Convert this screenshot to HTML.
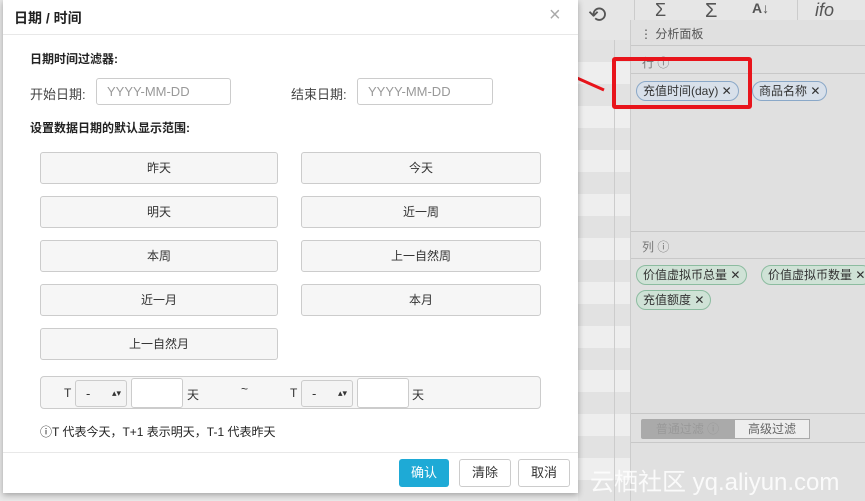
<!DOCTYPE html>
<html><head><meta charset="utf-8"><style>
*{box-sizing:border-box}
body{margin:0;width:865px;height:501px;overflow:hidden;position:relative;background:#e6e6e6;font-family:"Liberation Sans","Noto Sans CJK SC",sans-serif;font-size:12px;color:#333}
.abs{position:absolute}
.dlg{left:3px;top:0;width:575px;height:493px;background:#fff;box-shadow:0 2px 6px rgba(0,0,0,.3)}
.btn{position:absolute;width:238px;height:32px;background:#f6f6f6;border:1px solid #ccc;border-radius:3px;text-align:center;line-height:30px;font-size:12px;color:#333}
.inp{position:absolute;height:27px;border:1px solid #ccc;border-radius:3px;color:#999;font-size:13px;line-height:25px;padding-left:10px;background:#fff}
.tag{position:absolute;height:20px;border-radius:10px;line-height:18px;font-size:12px;padding:0 6px;color:#333}
.row{position:absolute;left:0;width:577px;height:1px;background:#ccc}
</style></head><body>
<!-- background table -->
<div class="abs" style="left:0;top:0;width:630px;height:501px;background:#e8e8e8"></div>
<div class="abs" style="left:578px;top:40px;width:52px;height:461px;background:repeating-linear-gradient(#e2e2e2 0 22px,#eeeeee 22px 44px)"></div>
<div class="abs" style="left:614px;top:40px;width:1px;height:461px;background:#ccc"></div>
<!-- toolbar -->
<div class="abs" style="left:578px;top:0;width:287px;height:40px;background:#e6e6e6"></div>
<div class="abs" style="left:588px;top:2px;font-size:22px;color:#555">⟲</div>
<div class="abs" style="left:634px;top:0;width:1px;height:20px;background:#ccc"></div>
<div class="abs" style="left:655px;top:0;font-size:18px;color:#555">Σ</div>
<div class="abs" style="left:705px;top:0;font-size:20px;color:#555">Σ</div>
<div class="abs" style="left:752px;top:0;font-size:14px;color:#555;font-weight:bold">A↓</div>
<div class="abs" style="left:797px;top:0;width:1px;height:20px;background:#ccc"></div>
<div class="abs" style="left:815px;top:0;font-size:18px;color:#555;font-style:italic">ifo</div>
<!-- panel -->
<div class="abs" style="left:630px;top:20px;width:235px;height:481px;background:#e0e0e0;border-left:1px solid #ccc"></div>
<div class="abs" style="left:640px;top:25px;font-size:12px;color:#555">⋮ 分析面板</div>
<div class="abs" style="left:631px;top:45px;width:234px;height:1px;background:#c8c8c8"></div>
<div class="abs" style="left:642px;top:54px;color:#777">行 ⓘ</div>
<div class="abs" style="left:631px;top:73px;width:234px;height:1px;background:#c8c8c8"></div>
<div class="tag" style="left:636px;top:81px;border:1px solid #8aa8c8;background:#d8e0ea">充值时间(day) ✕</div>
<div class="tag" style="left:752px;top:81px;border:1px solid #8aa8c8;background:#d8e0ea">商品名称 ✕</div>
<div class="abs" style="left:631px;top:231px;width:234px;height:1px;background:#c8c8c8"></div>
<div class="abs" style="left:642px;top:238px;color:#777">列 ⓘ</div>
<div class="abs" style="left:631px;top:258px;width:234px;height:1px;background:#c8c8c8"></div>
<div class="tag" style="left:636px;top:265px;border:1px solid #8cbca0;background:#cfe2d6">价值虚拟币总量 ✕</div>
<div class="tag" style="left:761px;top:265px;border:1px solid #8cbca0;background:#cfe2d6;white-space:nowrap">价值虚拟币数量 ✕</div>
<div class="tag" style="left:636px;top:290px;border:1px solid #8cbca0;background:#cfe2d6">充值额度 ✕</div>
<div class="abs" style="left:631px;top:413px;width:234px;height:1px;background:#c8c8c8"></div>
<div class="abs" style="left:641px;top:419px;width:93px;height:20px;background:#aaa;border-radius:2px 0 0 2px;color:#999;text-align:center;line-height:20px">普通过滤 ⓘ</div>
<div class="abs" style="left:734px;top:419px;width:76px;height:20px;background:#eee;border:1px solid #aaa;color:#666;text-align:center;line-height:18px">高级过滤</div>
<div class="abs" style="left:631px;top:442px;width:234px;height:1px;background:#c8c8c8"></div>
<div class="abs" style="left:590px;top:462px;font-size:24px;color:#fff;opacity:.85;white-space:nowrap">云栖社区 yq.aliyun.com</div>
<!-- red annotation -->
<div class="abs" style="left:612px;top:57px;width:140px;height:52px;border:4px solid #e8141b;border-radius:3px"></div>
<svg class="abs" style="left:562px;top:68px" width="45" height="25"><line x1="42" y1="22" x2="6" y2="6" stroke="#e8141b" stroke-width="3"/><polygon points="2,4 14,4 8,12" fill="#e8141b"/></svg>
<!-- dialog -->
<div class="abs dlg">
<div class="abs" style="left:11px;top:8px;font-size:14px;font-weight:bold;color:#222">日期 / 时间</div>
<div class="abs" style="left:546px;top:4px;font-size:20px;color:#aaa">×</div>
<div class="abs" style="left:0;top:34px;width:575px;height:1px;background:#e8e8e8"></div>
<div class="abs" style="left:27px;top:50px;font-weight:bold;font-size:12px;color:#222">日期时间过滤器:</div>
<div class="abs" style="left:27px;top:84px;font-size:13px;color:#444">开始日期:</div>
<div class="inp" style="left:93px;top:78px;width:135px">YYYY-MM-DD</div>
<div class="abs" style="left:288px;top:84px;font-size:13px;color:#444">结束日期:</div>
<div class="inp" style="left:354px;top:78px;width:136px">YYYY-MM-DD</div>
<div class="abs" style="left:27px;top:119px;font-weight:bold;font-size:12px;color:#222">设置数据日期的默认显示范围:</div>
<div class="btn" style="left:37px;top:152px">昨天</div>
<div class="btn" style="left:298px;top:152px;width:240px">今天</div>
<div class="btn" style="left:37px;top:196px">明天</div>
<div class="btn" style="left:298px;top:196px;width:240px">近一周</div>
<div class="btn" style="left:37px;top:240px">本周</div>
<div class="btn" style="left:298px;top:240px;width:240px">上一自然周</div>
<div class="btn" style="left:37px;top:284px">近一月</div>
<div class="btn" style="left:298px;top:284px;width:240px">本月</div>
<div class="btn" style="left:37px;top:328px">上一自然月</div>
<div class="abs" style="left:37px;top:376px;width:501px;height:33px;background:#f6f6f6;border:1px solid #ccc;border-radius:4px"></div>
<div class="abs" style="left:61px;top:386px">T</div>
<div class="inp" style="left:72px;top:380px;width:52px;color:#333;background:#f4f4f4">-<span style="position:absolute;right:5px;font-size:9px">▴▾</span></div>
<div class="inp" style="left:128px;top:378px;width:52px;height:30px"></div>
<div class="abs" style="left:184px;top:386px">天</div>
<div class="abs" style="left:238px;top:382px">~</div>
<div class="abs" style="left:287px;top:386px">T</div>
<div class="inp" style="left:298px;top:380px;width:52px;color:#333;background:#f4f4f4">-<span style="position:absolute;right:5px;font-size:9px">▴▾</span></div>
<div class="inp" style="left:354px;top:378px;width:52px;height:30px"></div>
<div class="abs" style="left:409px;top:386px">天</div>
<div class="abs" style="left:37px;top:423px;font-size:12px;color:#222">ⓘT 代表今天，T+1 表示明天，T-1 代表昨天</div>
<div class="abs" style="left:0;top:452px;width:575px;height:1px;background:#e8e8e8"></div>
<div class="abs" style="left:396px;top:459px;width:50px;height:28px;background:#1eaad6;border-radius:3px;color:#fff;text-align:center;line-height:28px;font-size:13px">确认</div>
<div class="abs" style="left:456px;top:459px;width:52px;height:28px;border:1px solid #ccc;border-radius:3px;text-align:center;line-height:26px;font-size:13px">清除</div>
<div class="abs" style="left:515px;top:459px;width:52px;height:28px;border:1px solid #ccc;border-radius:3px;text-align:center;line-height:26px;font-size:13px">取消</div>
</div>
</body></html>
